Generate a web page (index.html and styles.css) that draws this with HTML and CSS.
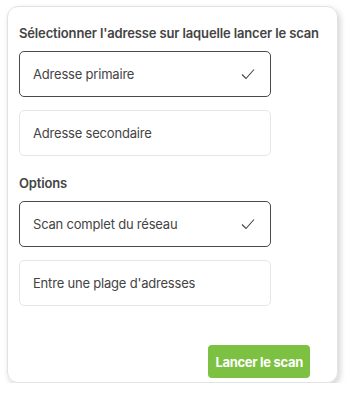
FILE: index.html
```html
<!DOCTYPE html>
<html lang="fr">
<head>
    <meta charset="UTF-8">
    <meta name="viewport" content="width=device-width, initial-scale=1.0">
    <title>Lancer un scan</title>
    <link rel="stylesheet" href="styles.css">
</head>
<body>
    <div class="carte">
        <h2 class="titre">Sélectionner l'adresse sur laquelle lancer le scan</h2>
        <div class="choix">
            <div class="option actif">Adresse primaire
                <svg class="coche" width="14" height="12" viewBox="0 0 14 12"><path d="M1 6.5 L5 10.5 L13 1.5" fill="none" stroke="#444" stroke-width="1.1"/></svg>
            </div>
            <div class="option">Adresse secondaire</div>
        </div>
        <h2 class="titre sous-titre">Options</h2>
        <div class="choix">
            <div class="option actif">Scan complet du réseau
                <svg class="coche" width="14" height="12" viewBox="0 0 14 12"><path d="M1 6.5 L5 10.5 L13 1.5" fill="none" stroke="#444" stroke-width="1.1"/></svg>
            </div>
            <div class="option">Entre une plage d'adresses</div>
        </div>
        <div class="actions">
            <button class="lancer">Lancer le scan</button>
        </div>
    </div>
</body>
</html>
```
FILE: styles.css
```css
body {
    font-family: Inter, "Noto Sans", sans-serif;
    background-color: #ffffff;
    margin: 0;
    padding: 6px 0 0 7px;
}
.carte {
    width: 331px;
    height: 377px;
    box-sizing: border-box;
    border: 1px solid #e2e2e2;
    border-radius: 11px;
    box-shadow: 2px 3px 6px rgba(0, 0, 0, 0.18);
    padding: 18px 11px 0 11px;
    display: flex;
    flex-direction: column;
}
.titre {
    margin: 0 0 10px 0;
    font-size: 13px;
    line-height: 16px;
    font-weight: 600;
    letter-spacing: -0.14px;
    color: #444;
}
.sous-titre {
    margin-top: 19px;
}
.choix {
    display: flex;
    flex-direction: column;
    gap: 13px;
}
.option {
    width: 252px;
    height: 46px;
    box-sizing: border-box;
    border: 1px solid #e6e6e6;
    border-radius: 5px;
    padding: 0 15px 0 13px;
    display: flex;
    align-items: center;
    justify-content: space-between;
    font-size: 13px;
    letter-spacing: -0.2px;
    color: #444;
}
.option.actif {
    border-color: #4a4a4a;
}
.actions {
    margin-top: auto;
    padding: 0 16px 4px 0;
    display: flex;
    justify-content: flex-end;
}
.lancer {
    background-color: #7cc142;
    color: white;
    border: none;
    border-radius: 4px;
    height: 33px;
    padding: 0 7px;
    font-family: Inter, "Noto Sans", sans-serif;
    font-size: 13px;
    font-weight: 700;
    letter-spacing: -0.3px;
}
```
